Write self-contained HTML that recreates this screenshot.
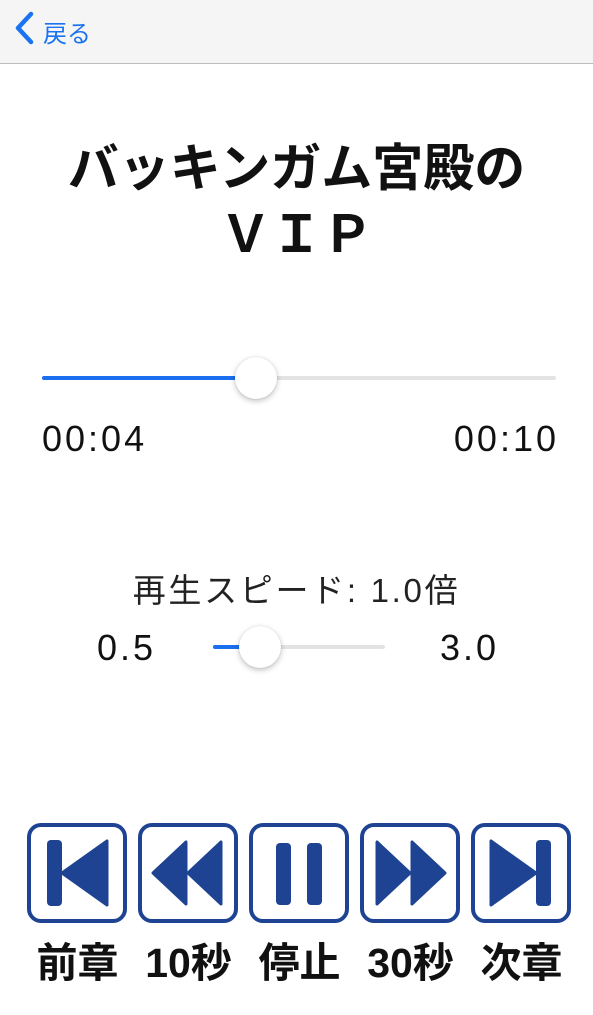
<!DOCTYPE html>
<html><head><meta charset="utf-8"><style>
body{margin:0;width:593px;height:1015px;background:#fff;position:relative;overflow:hidden;font-family:"Liberation Sans","Noto Sans CJK JP",sans-serif;}
.nav{position:absolute;left:0;top:0;width:593px;height:63px;background:#f6f5f5;border-bottom:1px solid #bdbdbd;}
.a{position:absolute;white-space:nowrap;}
.btn{position:absolute;top:823px;width:92px;height:92px;border:4px solid #1f4393;border-radius:14px;}
.lbl{position:absolute;top:939px;width:111px;text-align:center;font-size:41px;font-weight:bold;color:#111;line-height:48px;}
.num{font-size:36px;letter-spacing:3px;color:#111;}
</style></head><body>
<div class="nav">
<svg class="a" style="left:10px;top:10px" width="28" height="36" viewBox="0 0 28 36"><path d="M21 4 L8 18 L21 32" fill="none" stroke="#1a73f0" stroke-width="4.5" stroke-linecap="round" stroke-linejoin="round"/></svg>
<div class="a" style="left:43px;top:14px;font-size:24px;color:#1a73f0">戻る</div>
</div>
<div class="a" style="left:0;width:593px;top:136px;text-align:center;font-size:51px;font-weight:bold;line-height:66px;color:#111">バッキンガム宮殿の<br>ＶＩＰ</div>
<div class="a" style="left:42px;top:376px;width:514px;height:4px;background:#e3e3e3;border-radius:2px"></div>
<div class="a" style="left:42px;top:376px;width:214px;height:4px;background:#1a6ef0;border-radius:2px"></div>
<div class="a" style="left:235px;top:357px;width:42px;height:42px;border-radius:50%;background:#fff;box-shadow:0 2px 6px rgba(0,0,0,.25),0 0 1px rgba(0,0,0,.2)"></div>
<div class="a num" style="left:42px;top:418px">00:04</div>
<div class="a num" style="right:34px;top:418px">00:10</div>
<div class="a" style="left:0;width:593px;top:564px;text-align:center;font-size:33px;letter-spacing:2.7px;color:#222">再生スピード: 1.0倍</div>
<div class="a num" style="left:97px;top:627px">0.5</div>
<div class="a num" style="left:440px;top:627px">3.0</div>
<div class="a" style="left:213px;top:645px;width:172px;height:4px;background:#e3e3e3;border-radius:2px"></div>
<div class="a" style="left:213px;top:645px;width:47px;height:4px;background:#1a6ef0;border-radius:2px"></div>
<div class="a" style="left:239px;top:626px;width:42px;height:42px;border-radius:50%;background:#fff;box-shadow:0 2px 6px rgba(0,0,0,.25),0 0 1px rgba(0,0,0,.2)"></div>

<div class="btn" style="left:27px"><svg width="92" height="92"><rect x="16" y="13" width="15" height="66" rx="4" fill="#1f4393"/><path d="M31 46 L76 14 L76 78 Z" fill="#1f4393" stroke="#1f4393" stroke-width="3" stroke-linejoin="round"/></svg></div>
<div class="btn" style="left:138px"><svg width="92" height="92"><path d="M11 46 L44 15 L44 77 Z M46 46 L79 15 L79 77 Z" fill="#1f4393" stroke="#1f4393" stroke-width="3" stroke-linejoin="round"/></svg></div>
<div class="btn" style="left:249px"><svg width="92" height="92"><rect x="23" y="16" width="15" height="62" rx="4" fill="#1f4393"/><rect x="54" y="16" width="15" height="62" rx="4" fill="#1f4393"/></svg></div>
<div class="btn" style="left:360px"><svg width="92" height="92"><path d="M81 46 L48 15 L48 77 Z M46 46 L13 15 L13 77 Z" fill="#1f4393" stroke="#1f4393" stroke-width="3" stroke-linejoin="round"/></svg></div>
<div class="btn" style="left:471px"><svg width="92" height="92"><rect x="61" y="13" width="15" height="66" rx="4" fill="#1f4393"/><path d="M61 46 L16 14 L16 78 Z" fill="#1f4393" stroke="#1f4393" stroke-width="3" stroke-linejoin="round"/></svg></div>

<div class="lbl" style="left:22px">前章</div>
<div class="lbl" style="left:133px">10秒</div>
<div class="lbl" style="left:244px">停止</div>
<div class="lbl" style="left:355px">30秒</div>
<div class="lbl" style="left:466px">次章</div>
</body></html>
